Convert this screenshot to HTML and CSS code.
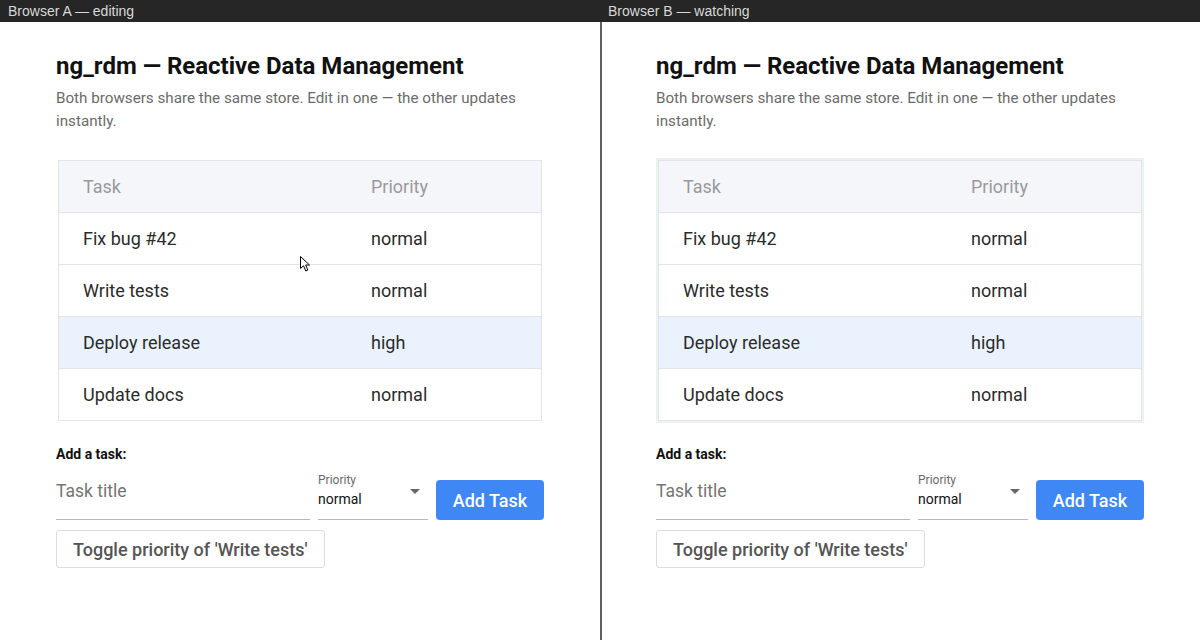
FILE: index.html
```html
<!DOCTYPE html>
<html lang="en">
<head>
  <meta charset="UTF-8" />
  <title>ng_rdm — two browsers</title>
  <link rel="stylesheet" href="styles.css">
</head>
<body>
  <div class="screen">
    <section class="pane">
      <div class="bar">Browser A — editing</div>
      <div class="page">
        <h1>ng_rdm — Reactive Data Management</h1>
        <p class="lead">Both browsers share the same store. Edit in one — the other updates instantly.</p>

        <div class="tasks">
          <div class="row head"><span>Task</span><span>Priority</span></div>
          <div class="row"><span>Fix bug #42</span><span>normal</span></div>
          <div class="row"><span>Write tests</span><span>normal</span></div>
          <div class="row high"><span>Deploy release</span><span>high</span></div>
          <div class="row"><span>Update docs</span><span>normal</span></div>
        </div>

        <div class="add-label">Add a task:</div>
        <div class="add-form">
          <div class="field"><span class="placeholder">Task title</span></div>
          <div class="select">
            <span class="select-label">Priority</span>
            <span class="select-value">normal</span>
            <span class="caret"></span>
          </div>
          <button class="btn-primary">Add Task</button>
        </div>
        <button class="btn-outline">Toggle priority of 'Write tests'</button>

        <svg class="cursor" width="12" height="17" viewBox="0 0 12 17">
          <path d="M0.5 0.5 L0.5 12.5 L3.5 9.8 L5.8 15 L7.8 14.1 L5.6 9 L9.5 9 Z" fill="#fff" stroke="#000" stroke-width="1"/>
        </svg>
      </div>
    </section>

    <section class="pane pane-b">
      <div class="bar">Browser B — watching</div>
      <div class="page">
        <h1>ng_rdm — Reactive Data Management</h1>
        <p class="lead">Both browsers share the same store. Edit in one — the other updates instantly.</p>

        <div class="tasks flash">
          <div class="row head"><span>Task</span><span>Priority</span></div>
          <div class="row"><span>Fix bug #42</span><span>normal</span></div>
          <div class="row"><span>Write tests</span><span>normal</span></div>
          <div class="row high"><span>Deploy release</span><span>high</span></div>
          <div class="row"><span>Update docs</span><span>normal</span></div>
        </div>

        <div class="add-label">Add a task:</div>
        <div class="add-form">
          <div class="field"><span class="placeholder">Task title</span></div>
          <div class="select">
            <span class="select-label">Priority</span>
            <span class="select-value">normal</span>
            <span class="caret"></span>
          </div>
          <button class="btn-primary">Add Task</button>
        </div>
        <button class="btn-outline">Toggle priority of 'Write tests'</button>
      </div>
    </section>
  </div>
</body>
</html>
```

FILE: styles.css
```css
body {
  margin: 0;
  font-family: Roboto, "Noto Sans", sans-serif;
  background: #fff;
  color: #222;
}
.screen {
  display: grid;
  grid-template-columns: 600px 600px;
  height: 640px;
  overflow: hidden;
}
.pane {
  display: flex;
  flex-direction: column;
}
.bar {
  height: 22px;
  line-height: 22px;
  background: #262626;
  color: #d8d8d8;
  font-family: "Liberation Sans", Arial, sans-serif;
  font-size: 14px;
  padding-left: 8px;
}
.page {
  position: relative;
  flex: 1;
  padding: 31px 56px 0 56px;
}
.pane-b .page {
  border-left: 2px solid #606060;
  padding-left: 54px;
}
h1 {
  margin: 0;
  font-size: 24px;
  font-weight: 700;
  color: #111;
  line-height: 26px;
}
.lead {
  margin: 8px 0 0;
  font-size: 15.2px;
  line-height: 23px;
  color: #6b6b6b;
}
.tasks {
  margin: 27px 2px 0;
  border: 1px solid #e3e4e9;
}
.tasks.flash {
  box-shadow: 0 0 0 2px #ecf2ed;
}
.row {
  display: grid;
  grid-template-columns: 288px 1fr;
  padding-left: 24px;
  height: 51px;
  align-items: center;
  font-size: 18px;
  color: #2b2b2b;
  border-top: 1px solid #e3e4e9;
}
.row.head {
  border-top: none;
  background: #f5f6fa;
  color: #9a9a9e;
}
.row.high {
  background: #eaf2fe;
}
.add-label {
  margin-top: 25px;
  font-size: 14px;
  font-weight: 700;
  color: #111;
}
.add-form {
  display: flex;
  gap: 8px;
  margin-top: 18px;
  height: 40px;
}
.field {
  width: 254px;
  border-bottom: 1px solid #b8b8b8;
}
.placeholder {
  display: block;
  font-size: 17.5px;
  color: #757575;
  line-height: 22px;
}
.select {
  position: relative;
  width: 110px;
  border-bottom: 1px solid #b8b8b8;
}
.select-label {
  display: block;
  font-size: 12px;
  color: #6b6b6b;
  line-height: 13px;
  margin-top: -6px;
}
.select-value {
  display: block;
  font-size: 14px;
  color: #111;
  line-height: 18px;
  margin-top: 3px;
}
.caret {
  position: absolute;
  right: 8px;
  top: 9px;
  border-left: 5px solid transparent;
  border-right: 5px solid transparent;
  border-top: 5px solid #666;
}
.btn-primary {
  width: 108px;
  height: 40px;
  border: none;
  border-radius: 4px;
  background: #3f87f5;
  color: #fff;
  font-family: Roboto, sans-serif;
  font-size: 18px;
  font-weight: 500;
}
.btn-outline {
  margin-top: 10px;
  height: 38px;
  padding: 0 16px;
  background: #fff;
  border: 1px solid #dcdce0;
  border-radius: 3px;
  color: #555;
  font-family: Roboto, sans-serif;
  font-size: 18px;
  font-weight: 500;
}
.cursor {
  position: absolute;
  left: 300px;
  top: 234px;
}
```
